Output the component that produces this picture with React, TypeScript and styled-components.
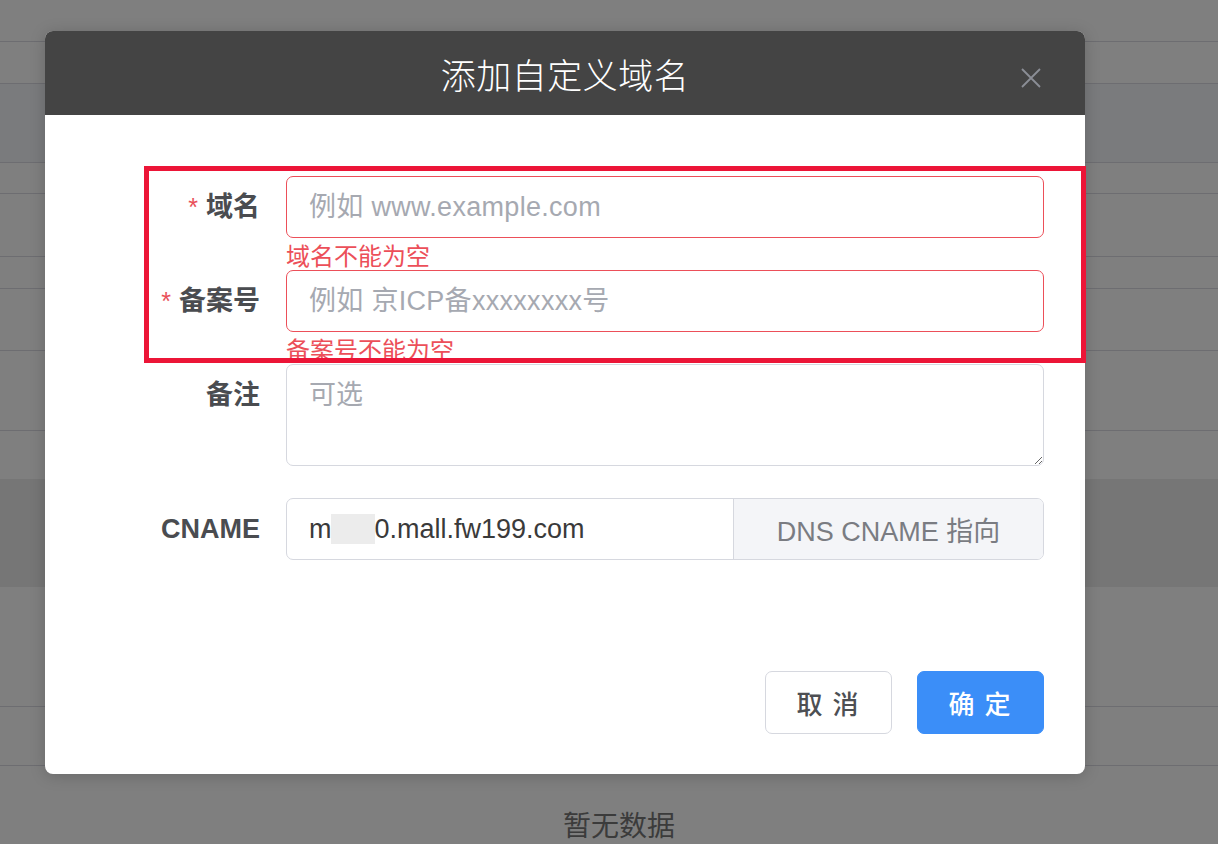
import styled, { createGlobalStyle } from 'styled-components';

const GlobalStyle = createGlobalStyle`
  html, body {
    margin: 0;
    padding: 0;
    background: #7f7f7f;
    font-family: "Liberation Sans", "Noto Sans CJK SC", sans-serif;
  }
  * { box-sizing: border-box; }
`;

type BgRow = { h: number; tone?: string; line?: boolean };

const bgRows: BgRow[] = [
  { h: 42, line: true },
  { h: 42, line: true },
  { h: 79, tone: '#7a7b7d', line: true },
  { h: 31, line: true },
  { h: 63, line: true },
  { h: 32, line: true },
  { h: 62, line: true },
  { h: 80, line: true },
  { h: 48 },
  { h: 108, tone: '#767676' },
  { h: 120, line: true },
  { h: 59, line: true },
];

const App = () => {
  return (
    <Page>
      <GlobalStyle />
      <Backdrop>
        {bgRows.map((r, i) => (
          <BgStripe key={i} $h={r.h} $tone={r.tone} $line={r.line} />
        ))}
        <EmptyText>暂无数据</EmptyText>
      </Backdrop>

      <Modal>
        <Header>
          <Title>添加自定义域名</Title>
          <CloseBtn aria-label="close">
            <svg width="22" height="22" viewBox="0 0 22 22">
              <path d="M2 2 L20 20 M20 2 L2 20" stroke="#8b8e96" strokeWidth="1.8" />
            </svg>
          </CloseBtn>
        </Header>

        <Body>
          <Field>
            <Label $required>域名</Label>
            <Control>
              <TextInput $error placeholder="例如 www.example.com" />
              <ErrorSlot>域名不能为空</ErrorSlot>
            </Control>
          </Field>
          <Field>
            <Label $required>备案号</Label>
            <Control>
              <TextInput $error placeholder="例如 京ICP备xxxxxxxx号" />
              <ErrorSlot>备案号不能为空</ErrorSlot>
            </Control>
          </Field>
          <Field>
            <Label>备注</Label>
            <Control>
              <TextArea placeholder="可选" />
              <ErrorSlot />
            </Control>
          </Field>
          <Field>
            <Label>CNAME</Label>
            <Control>
              <InputGroup>
                <GroupValue>
                  m<Blur />0.mall.fw199.com
                </GroupValue>
                <Append>DNS CNAME 指向</Append>
              </InputGroup>
            </Control>
          </Field>
        </Body>

        <Footer>
          <Button>取 消</Button>
          <Button $primary>确 定</Button>
        </Footer>

        <Highlight />
      </Modal>
    </Page>
  );
};

export default App;

const Page = styled.div`
  position: relative;
  width: 1218px;
  height: 844px;
  overflow: hidden;
`;

const Backdrop = styled.div`
  display: flex;
  flex-direction: column;
  height: 100%;
`;

const BgStripe = styled.div<{ $h: number; $tone?: string; $line?: boolean }>`
  height: ${(p) => p.$h}px;
  flex-shrink: 0;
  background: ${(p) => p.$tone || 'transparent'};
  border-bottom: ${(p) => (p.$line ? '1px solid #6d6d71' : 'none')};
`;

const EmptyText = styled.div`
  text-align: center;
  padding: 40px 0 0 20px;
  font-family: "Noto Sans CJK SC", sans-serif;
  font-size: 28px;
  line-height: 36px;
  color: #3b3b3b;
`;

const Modal = styled.div`
  position: absolute;
  left: 45px;
  top: 31px;
  width: 1040px;
  height: 743px;
  background: #fff;
  border-radius: 8px;
  box-shadow: 0 2px 16px rgba(0, 0, 0, 0.18);
  display: flex;
  flex-direction: column;
`;

const Header = styled.div`
  position: relative;
  height: 84px;
  background: #444444;
  border-radius: 8px 8px 0 0;
  display: flex;
  align-items: center;
  justify-content: center;
`;

const Title = styled.div`
  font-family: "Noto Sans CJK SC", sans-serif;
  font-size: 35px;
  font-weight: 300;
  color: #ffffff;
  letter-spacing: 0.5px;
`;

const CloseBtn = styled.div`
  position: absolute;
  right: 43px;
  top: 36px;
  width: 22px;
  height: 22px;
  display: flex;
`;

const Body = styled.div`
  padding: 61px 41px 0 40px;
  display: flex;
  flex-direction: column;
`;

const Field = styled.div`
  display: grid;
  grid-template-columns: 175px 1fr;
  column-gap: 26px;
  align-items: start;
`;

const Label = styled.div<{ $required?: boolean }>`
  text-align: right;
  line-height: 62px;
  font-family: "Liberation Sans", "Noto Sans CJK SC", sans-serif;
  font-size: 27px;
  font-weight: 700;
  color: #4a4c50;
  &::before {
    content: ${(p) => (p.$required ? '"*"' : 'none')};
    color: #e9505a;
    margin-right: 8px;
    font-size: 25px;
    font-weight: 400;
  }
`;

const Control = styled.div`
  display: flex;
  flex-direction: column;
`;

const TextInput = styled.input<{ $error?: boolean }>`
  height: 62px;
  width: 100%;
  border: 1.5px solid ${(p) => (p.$error ? '#ec4f59' : '#d6d8df')};
  border-radius: 7px;
  padding: 0 22px;
  font-family: "Liberation Sans", "Noto Sans CJK SC", sans-serif;
  font-size: 27px;
  letter-spacing: 0.3px;
  color: #555;
  outline: none;
  &::placeholder {
    color: #a6a9b1;
  }
`;

const TextArea = styled.textarea`
  height: 102px;
  width: 100%;
  border: 1.5px solid #d6d8df;
  border-radius: 7px;
  padding: 12px 22px;
  font-family: "Noto Sans CJK SC", sans-serif;
  font-size: 27px;
  line-height: 32px;
  resize: vertical;
  outline: none;
  &::placeholder {
    color: #a6a9b1;
  }
`;

const ErrorSlot = styled.div`
  height: 32px;
  line-height: 34px;
  font-family: "Noto Sans CJK SC", sans-serif;
  font-size: 24px;
  color: #ec4f59;
`;

const InputGroup = styled.div`
  display: flex;
  height: 62px;
  border: 1.5px solid #d6d8df;
  border-radius: 7px;
  overflow: hidden;
`;

const GroupValue = styled.div`
  flex: 1;
  display: flex;
  align-items: center;
  padding: 0 22px;
  font-family: "Liberation Sans", sans-serif;
  font-size: 27px;
  color: #3a3a3a;
`;

const Blur = styled.span`
  display: inline-block;
  width: 44px;
  height: 30px;
  margin: 0 0 0 -1px;
  background: #ececec;
`;

const Append = styled.div`
  width: 310px;
  display: flex;
  align-items: center;
  justify-content: center;
  background: #f4f5f8;
  border-left: 1.5px solid #d6d8df;
  font-family: "Liberation Sans", "Noto Sans CJK SC", sans-serif;
  font-size: 27px;
  color: #7a7c82;
`;

const Footer = styled.div`
  margin-top: auto;
  padding: 0 41px 40px 0;
  display: flex;
  justify-content: flex-end;
  gap: 25px;
`;

const Button = styled.button<{ $primary?: boolean }>`
  width: 127px;
  height: 63px;
  border-radius: 7px;
  border: 1.5px solid ${(p) => (p.$primary ? '#3b8ef8' : '#d6d8df')};
  background: ${(p) => (p.$primary ? '#3b8ef8' : '#ffffff')};
  color: ${(p) => (p.$primary ? '#ffffff' : '#4d4f53')};
  font-family: "Noto Sans CJK SC", sans-serif;
  font-size: 26px;
  font-weight: 500;
  letter-spacing: 2px;
  cursor: pointer;
`;

const Highlight = styled.div`
  position: absolute;
  left: 99px;
  top: 135px;
  width: 942px;
  height: 197px;
  border: 5px solid #ec1537;
  pointer-events: none;
`;
